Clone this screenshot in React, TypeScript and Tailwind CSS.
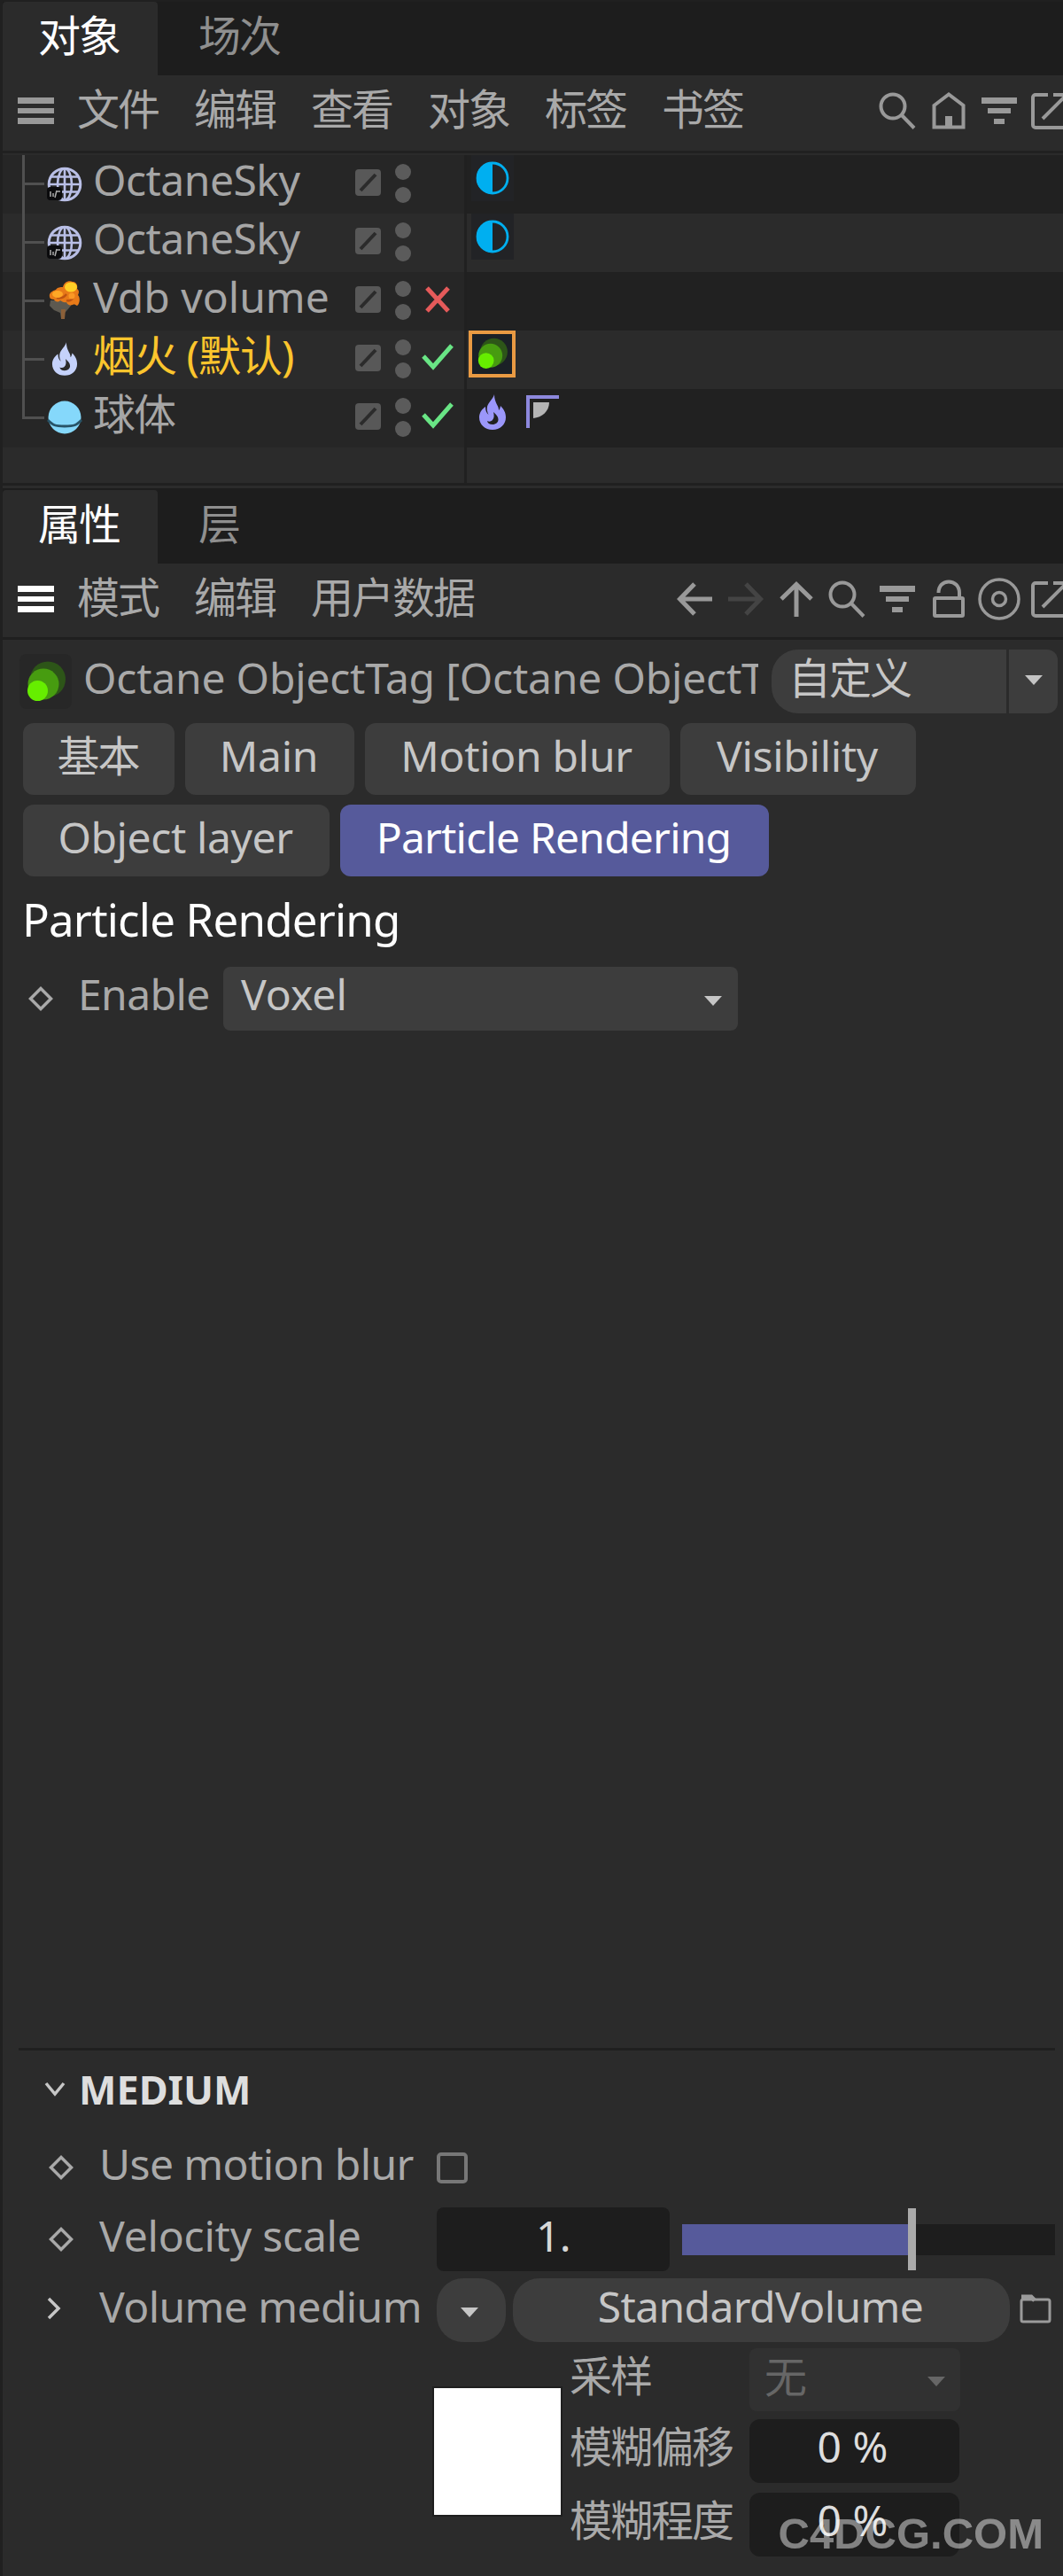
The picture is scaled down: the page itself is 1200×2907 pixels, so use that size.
import React from 'react';
import clsx from 'clsx';

type IconProps = { className?: string };

const SearchIcon = () => (
  <svg width="44" height="44" viewBox="0 0 44 44" fill="none" stroke="currentColor" strokeWidth="4">
    <circle cx="17" cy="17" r="13.5" />
    <path d="M26.5 26.5 41 41.500" />
  </svg>
);

const HomeIcon = () => (
  <svg width="44" height="44" viewBox="0 0 44 44" fill="none" stroke="currentColor" strokeWidth="4">
    <path d="M5.500 16 22 3.500 38.500 16V40.500H5.500Z" />
    <path d="M22 41V28" strokeWidth="8" />
  </svg>
);

const FilterIcon = () => (
  <svg width="44" height="44" viewBox="0 0 44 44" fill="currentColor">
    <path d="M2 7h40v7H2zM9 19h26v6H9zM16 31h12v6H16z" />
  </svg>
);

const ExternalIcon = () => (
  <svg width="44" height="44" viewBox="0 0 44 44" fill="none" stroke="currentColor" strokeWidth="4">
    <path d="M20 4H6a3 3 0 0 0-3 3v31a3 3 0 0 0 3 3h31a3 3 0 0 0 3-3V24" />
    <path d="M26 4h15v15M41 4 14 31" />
  </svg>
);

const ArrowIcon = ({ className }: IconProps) => (
  <svg
    className={className}
    width="40"
    height="40"
    viewBox="0 0 40 40"
    fill="none"
    stroke="currentColor"
    strokeWidth="5"
  >
    <path d="M40 20H4M20 3 3.500 20 20 37" />
  </svg>
);

const LockIcon = () => (
  <svg width="44" height="44" viewBox="0 0 44 44" fill="none" stroke="currentColor" strokeWidth="4">
    <rect x="6" y="21" width="32" height="20" rx="1" />
    <path d="M10.500 15C10.500 7 15.500 2.500 22 2.500S34 7 34 15v6" />
  </svg>
);

const TargetIcon = () => (
  <svg width="50" height="50" viewBox="0 0 50 50" fill="none" stroke="currentColor" strokeWidth="3.500">
    <circle cx="25" cy="25" r="22" />
    <circle cx="25" cy="25" r="7.500" />
  </svg>
);

const CaretIcon = ({ className }: IconProps) => (
  <svg className={className} width="20" height="11" viewBox="0 0 20 11" fill="currentColor">
    <path d="M0 0h20L10 11Z" />
  </svg>
);

const DiamondIcon = () => (
  <svg width="28" height="28" viewBox="0 0 28 28" fill="none" stroke="#a9a9a9" strokeWidth="3.500">
    <path d="M14 2.500 25.500 14 14 25.500 2.500 14Z" />
  </svg>
);

const FlameIcon = ({ className }: IconProps) => (
  <svg className={className} width="32" height="40" viewBox="0 0 32 40" fill="currentColor">
    <path
      fillRule="evenodd"
      d="M18 0c-1 5-7 9-8 14-.6 3 0 6 1.500 9-2.500-2-3.500-5-3.500-9-3 2-7 6-7 12 0 8 6.500 14 15 14s15-6 15-14c0-6-3-10-6-13-.3 2.500-1 4-2 5 .5-5-5-8-5-18Zm-1 20c3 3 5.500 5 5.500 8.500 0 3-2.700 5.500-6.500 5.500-3.500 0-5.500-1.500-6-4 2 1 4 .8 5.500-.5 2.500-2.300 2.500-5.500 1.500-9.500Z"
    />
  </svg>
);

const GlobeIcon = () => (
  <svg width="42" height="42" viewBox="0 0 42 42" fill="none" stroke="#b9bfe6" strokeWidth="2.600">
    <circle cx="21" cy="21" r="17.800" strokeWidth="3" />
    <ellipse cx="21" cy="21" rx="8" ry="17.800" />
    <path d="M21 3v36M3 21h36M6 12.500h30M6 29.500h30" />
    <rect x="1" y="24" width="17" height="15" rx="4" fill="#0b0b0d" stroke="none" />
    <path d="M5 29v6M8 35v-4M12 28l-2 8M12 29h4" stroke="#aaa" strokeWidth="1.500" />
  </svg>
);

const CloudIcon = () => (
  <svg className="mb-0.5" width="36" height="44" viewBox="0 0 36 44">
    <path d="M2 22h24l-1 6-5 6-2 2v7h-4l-1-7-7-3-5-5Z" fill="#5d5950" />
    <path d="M14 32h5l-1 11h-4Z" fill="#8b6039" />
    <path
      d="M1 18c-1-4 3-7 7-8 2-3 5-3 8-3 1-5 6-8 11-6 4 0 6 4 5 8 3 2 2 5 1 7 3 3 2 10-1 12-2-1-3-2-5-1-3 1-6 0-7-3-3 1-5-1-7-2-3 3-6 1-7-1-3 0-5-1-5-3Z"
      fill="#e87a18"
    />
    <path d="M9 19c4 1 8 0 11-4M20 22c3 1 6 0 8-4" fill="none" stroke="#bd5312" strokeWidth="2.500" />
    <ellipse cx="25" cy="7" rx="7" ry="5.500" fill="#ffd026" />
    <ellipse cx="10" cy="15" rx="6" ry="4" fill="#ffa726" />
    <circle cx="26" cy="17" r="3.500" fill="#fb9825" />
  </svg>
);

const SphereIcon = () => (
  <svg width="42" height="42" viewBox="0 0 42 42">
    <circle cx="21" cy="20" r="18.500" fill="#85d8fb" />
    <path d="M2 23c6 6 8 7 19 7s13-1 19-7" fill="none" stroke="#285468" strokeWidth="2.800" />
  </svg>
);

const OctaneIcon = ({ className }: IconProps) => (
  <svg className={className} viewBox="0 0 46 52">
    <circle cx="25" cy="23.500" r="20" fill="#2d5518" />
    <circle cx="20" cy="29" r="17.500" fill="#479c10" />
    <circle cx="13.500" cy="36.500" r="11.500" fill="#66ee00" />
  </svg>
);

const HalfCircleTag = () => (
  <span className="flex h-[52px] w-12 items-center justify-center bg-[#222326]">
    <svg width="38" height="38" viewBox="0 0 38 38">
      <circle cx="19" cy="19" r="17" fill="none" stroke="#00aff0" strokeWidth="2.800" />
      <path d="M19 1a18 18 0 0 0 0 36Z" fill="#00aff0" />
    </svg>
  </span>
);

const PhongTag = () => (
  <svg width="38" height="38" viewBox="0 0 38 38">
    <path d="M2 37V2h35" fill="none" stroke="#8d88dd" strokeWidth="4" />
    <path d="M8 8h18c0 10-8 17-18 18Z" fill="#b4b4b4" />
  </svg>
);

const Hamburger = ({ color }: { color: string }) => (
  <div className="flex w-[41px] flex-col gap-[5px]">
    <span className={clsx('h-[7px]', color)} />
    <span className={clsx('h-[6px]', color)} />
    <span className={clsx('h-[7px]', color)} />
  </div>
);

const TabBar = ({ tabs }: { tabs: string[] }) => (
  <div className="flex h-[83px] bg-[#1d1d1d] text-[48px] tracking-[-2px]">
    {tabs.map((tab, i) => (
      <div
        key={tab}
        className={clsx(
          'flex items-center pb-[7px]',
          i === 0 ? 'w-[175px] rounded-t-[4px] bg-[#2b2b2b] pl-10 text-white' : 'pl-[46px] text-[#8f8f8f]'
        )}
      >
        {tab}
      </div>
    ))}
  </div>
);

type MenuBarProps = {
  items: string[];
  icons: React.ReactNode[];
  color: string;
};

const MenuBar = ({ items, icons, color }: MenuBarProps) => (
  <div className="flex h-[85px] items-center overflow-hidden pb-[5px] pl-[17px]">
    <Hamburger color={color} />
    <div className="ml-[26px] flex gap-10 pb-1 text-[48px] tracking-[-2px] text-[#a9a9a9]">
      {items.map((item) => (
        <span key={item}>{item}</span>
      ))}
    </div>
    <div className="-mr-[14px] ml-auto flex items-center text-[#999]">
      {icons.map((icon, i) => (
        <span key={i} className="flex w-[57.300px] justify-center">
          {icon}
        </span>
      ))}
    </div>
  </div>
);

type SceneObject = {
  name: string;
  icon: React.ReactNode;
  tracking?: string;
  state?: 'on' | 'off';
  selected?: boolean;
  tags?: React.ReactNode;
};

const objects: SceneObject[] = [
  { name: 'OctaneSky', icon: <GlobeIcon />, tracking: 'tracking-[-0.5px]', tags: <HalfCircleTag /> },
  { name: 'OctaneSky', icon: <GlobeIcon />, tracking: 'tracking-[-0.5px]', tags: <HalfCircleTag /> },
  { name: 'Vdb volume', icon: <CloudIcon />, tracking: 'tracking-[0px]', state: 'off' },
  {
    name: '烟火 (默认)',
    icon: <FlameIcon className="mb-0.5 h-[38px] w-[30px] text-[#c5d2fb]" />,
    tracking: 'tracking-[-1px]',
    state: 'on',
    selected: true,
    tags: (
      <span className="-ml-[3px] flex size-[53px] items-center justify-center border-4 border-[#e99a43] bg-[#1b2026]">
        <OctaneIcon className="h-10 w-9" />
      </span>
    )
  },
  {
    name: '球体',
    icon: <SphereIcon />,
    tracking: 'tracking-[-2px]',
    state: 'on',
    tags: (
      <>
        <FlameIcon className="ml-2 text-[#9b97fa]" />
        <span className="ml-[22px]">
          <PhongTag />
        </span>
      </>
    )
  }
];

const ObjectRow = ({ object, index }: { object: SceneObject; index: number }) => {
  const { name, icon, tracking, state, selected, tags } = object;
  const isLast = index === objects.length - 1;
  const striped = index % 2 === 0;

  return (
    <div className="flex h-[66px]">
      <div className={clsx('flex w-[521px] items-center', striped ? 'bg-[#262626]' : 'bg-[#2b2b2b]')}>
        <div className="ml-[22px] flex h-full w-[25px] flex-col">
          <div className="h-[34px] border-b-[3px] border-l-[3px] border-[#505050]" />
          {!isLast && <div className="flex-1 border-l-[3px] border-[#505050]" />}
        </div>
        <span className="ml-0.5 flex w-[42px] justify-center">{icon}</span>
        <span
          className={clsx(
            'ml-[11px] w-[296px] whitespace-nowrap pb-[11px] text-[48px]',
            selected ? 'text-[#fbc52d]' : 'text-[#a6a6a6]',
            tracking
          )}
        >
          {name}
        </span>
        <svg width="29" height="30" viewBox="0 0 29 30" className="mb-1 shrink-0">
          <rect width="29" height="30" rx="4" fill="#585858" />
          <path d="M6 24 23 6" stroke="#2b2b2b" strokeWidth="4" />
        </svg>
        <span className="mb-0.5 ml-4 flex flex-col gap-2">
          <span className="size-[18px] rounded-full bg-[#5b5b5b]" />
          <span className="size-[18px] rounded-full bg-[#5b5b5b]" />
        </span>
        {state === 'on' && (
          <svg
            className="mb-[6px] ml-3 shrink-0"
            width="36"
            height="32"
            viewBox="0 0 36 32"
            fill="none"
            stroke="#69e585"
            strokeWidth="5"
          >
            <path d="M2 15 13 27 34 3" />
          </svg>
        )}
        {state === 'off' && (
          <svg
            className="mb-[5px] ml-4 shrink-0"
            width="28"
            height="30"
            viewBox="0 0 28 30"
            fill="none"
            stroke="#e55a5a"
            strokeWidth="5"
          >
            <path d="M2 2 26 28M26 2 2 28" />
          </svg>
        )}
      </div>
      <div
        className={clsx(
          'flex flex-1 items-center border-l-[3px] border-[#202020] pb-[14px] pl-[5px]',
          striped ? 'bg-[#212121]' : 'bg-[#2b2b2b]'
        )}
      >
        {tags}
      </div>
    </div>
  );
};

const ObjectManager = () => (
  <section>
    <TabBar tabs={['对象', '场次']} />
    <MenuBar
      items={['文件', '编辑', '查看', '对象', '标签', '书签']}
      color="bg-[#999]"
      icons={[<SearchIcon />, <HomeIcon />, <FilterIcon />, <ExternalIcon />]}
    />
    <div className="mb-[2px] h-[3px] bg-[#212121]" />
    {objects.map((object, i) => (
      <ObjectRow key={i} object={object} index={i} />
    ))}
    <div className="flex h-10">
      <div className="w-[521px]" />
      <div className="w-[3px] bg-[#202020]" />
    </div>
    <div className="h-[3px] bg-[#202020]" />
  </section>
);

const AttributeTab = ({ label, width, active }: { label: string; width: string; active?: boolean }) => (
  <div
    className={clsx(
      'flex h-[81px] items-center justify-center whitespace-nowrap rounded-xl pb-[7px] pr-0.5',
      width,
      active ? 'bg-[#565a9b] tracking-[-0.8px] text-white' : 'bg-[#3d3d3d] text-[#c6c6c6]'
    )}
  >
    {label}
  </div>
);

const AttributeHeader = () => (
  <div className="mt-[11px] flex h-[72px] items-center">
    <span className="ml-[19px] flex h-[62px] w-[59px] items-center justify-center rounded-lg bg-[#272727]">
      <OctaneIcon className="h-[52px] w-[46px]" />
    </span>
    <span className="ml-[13px] w-[762px] overflow-hidden whitespace-nowrap pb-[9px] tracking-[-0.2px] text-[#a9a9a9]">
      Octane ObjectTag [Octane ObjectT
    </span>
    <div className="ml-[15px] flex h-full w-[265px] items-center rounded-l-[30px] bg-[#3d3d3d] pb-2 pl-[19px] tracking-[-2px] text-[#c6c6c6]">
      自定义
    </div>
    <div className="ml-[3px] flex h-full w-[55px] items-center justify-center rounded-r-xl bg-[#3d3d3d]">
      <CaretIcon className="mt-[-4px] text-[#c4c4c4]" />
    </div>
  </div>
);

const MediumGroup = () => (
  <div className="mt-auto flex h-[596px] flex-col text-[#a9a9a9]">
    <div className="ml-[18px] mr-[9px] h-[3px] shrink-0 bg-[#1f1f1f]" />
    <div className="mt-[20px] flex h-[52px] items-center">
      <svg
        className="ml-[47px] mt-[-4px]"
        width="24"
        height="18"
        viewBox="0 0 24 18"
        fill="none"
        stroke="#c6c6c6"
        strokeWidth="3.500"
      >
        <path d="M2 2 12 14 22 2" />
      </svg>
      <span className="ml-[15px] pb-1 text-[45px] font-bold tracking-normal text-[#dedede]">MEDIUM</span>
    </div>
    <div className="mt-[24px] flex h-[72px] items-center">
      <span className="ml-[52px]">
        <DiamondIcon />
      </span>
      <span className="ml-[29px] w-[381px] whitespace-nowrap pb-2">Use motion blur</span>
      <span className="h-[35px] w-[35px] rounded-[5px] border-4 border-[#777]" />
    </div>
    <div className="mt-[9px] flex h-[72px] items-center">
      <span className="ml-[52px]">
        <DiamondIcon />
      </span>
      <span className="ml-[29px] w-[381px] whitespace-nowrap pb-2 tracking-[-0.2px]">Velocity scale</span>
      <span className="flex h-full w-[263px] items-center justify-center rounded-lg bg-[#1d1d1d] pb-[9px] text-[#d8d8d8]">
        1.
      </span>
      <div className="ml-[14px] flex h-[70px] w-[421px] items-center">
        <span className="h-[35px] w-[255px] bg-[#565a9b]" />
        <span className="h-[70px] w-[9px] bg-[#aaa]" />
        <span className="h-[35px] w-[157px] bg-[#1d1d1d]" />
      </div>
    </div>
    <div className="mt-2 flex h-[72px] items-center">
      <svg
        className="mb-1 ml-[49px]"
        width="18"
        height="26"
        viewBox="0 0 18 26"
        fill="none"
        stroke="#c6c6c6"
        strokeWidth="3.500"
      >
        <path d="M3 2 14 13 3 24" />
      </svg>
      <span className="ml-[42px] w-[381px] whitespace-nowrap pb-2">Volume medium</span>
      <span className="flex h-full w-[78px] items-center justify-center rounded-[30px] bg-[#3d3d3d] pr-1 text-[#c6c6c6]">
        <CaretIcon className="mt-1" />
      </span>
      <span className="ml-[8px] flex h-full w-[561px] items-center justify-center rounded-[30px] bg-[#3d3d3d] pb-[9px] pr-0.5 text-[#c6c6c6]">
        StandardVolume
      </span>
      <svg
        className="mb-1 ml-[11px]"
        width="36"
        height="34"
        viewBox="0 0 36 34"
        fill="none"
        stroke="#9b9b9b"
        strokeWidth="3"
      >
        <rect x="2" y="7" width="32" height="25" rx="2" />
        <path d="M2 4h11l4 4" strokeWidth="5" />
      </svg>
    </div>
    <div className="mt-[7px] flex">
      <div className="ml-[487px] mt-[45px] h-[143px] w-[143px] bg-white ring-2 ring-[#1f1f1f]" />
      <div className="ml-[10px] flex flex-col gap-[9px]">
        <div className="flex h-[71px] items-center tracking-[-2px]">
          <span className="w-[203px] pb-[9px]">采样</span>
          <span className="flex h-[71px] w-[238px] items-center justify-between rounded-lg bg-[#313131] pb-2 pl-[17px] pr-[17px] text-[#666]">
            无
            <CaretIcon className="mt-3" />
          </span>
        </div>
        {['模糊偏移', '模糊程度'].map((label, i) => (
          <div key={label} className={clsx('flex h-[72px] items-center', i === 1 && 'mt-0.5')}>
            <span className="w-[203px] whitespace-nowrap pb-[10px] tracking-[-2px]">{label}</span>
            <span className="flex h-full w-[237px] items-center justify-center rounded-xl bg-[#1d1d1d] pb-[10px] pr-1 tracking-normal text-[#dedede]">
              0 %
            </span>
          </div>
        ))}
      </div>
    </div>
  </div>
);

const AttributeManager = () => (
  <section className="flex flex-1 flex-col">
    <div className="mt-[3px] h-[2px] bg-[#1d1d1d]" />
    <TabBar tabs={['属性', '层']} />
    <MenuBar
      items={['模式', '编辑', '用户数据']}
      color="bg-white"
      icons={[
        <ArrowIcon />,
        <ArrowIcon className="rotate-180 text-[#444]" />,
        <ArrowIcon className="rotate-90" />,
        <SearchIcon />,
        <FilterIcon />,
        <LockIcon />,
        <TargetIcon />,
        <ExternalIcon />
      ]}
    />
    <div className="-mt-0.5 h-[3px] bg-[#1f1f1f]" />
    <AttributeHeader />
    <div className="ml-[23px] mt-[11px] flex flex-col gap-[11px]">
      <div className="flex gap-3">
        <AttributeTab label="基本" width="w-[171px] tracking-[-2px]" />
        <AttributeTab label="Main" width="w-[191px] tracking-[-0.3px]" />
        <AttributeTab label="Motion blur" width="w-[344px] tracking-[-0.3px]" />
        <AttributeTab label="Visibility" width="w-[266px] tracking-[-0.3px]" />
      </div>
      <div className="flex gap-3">
        <AttributeTab label="Object layer" width="w-[346px] tracking-[-0.4px]" />
        <AttributeTab label="Particle Rendering" width="w-[484px]" active />
      </div>
    </div>
    <h2 className="ml-[22px] mt-[12px] text-[51px] leading-[72px] tracking-[-0.8px] text-white">
      Particle Rendering
    </h2>
    <div className="mt-[18px] flex h-[72px] items-center">
      <span className="ml-[29px]">
        <DiamondIcon />
      </span>
      <span className="ml-[28px] w-[164px] pb-[10px] text-[#a9a9a9]">Enable</span>
      <div className="flex h-full w-[581px] items-center justify-between rounded-lg bg-[#3d3d3d] pl-5 pr-[18px] text-[#c6c6c6]">
        <span className="pb-[10px] tracking-normal">Voxel</span>
        <CaretIcon className="mt-[5px]" />
      </div>
    </div>
    <MediumGroup />
  </section>
);

const App = () => (
  <div className="relative flex h-[2907px] w-[1200px] flex-col overflow-hidden bg-[#2b2b2b] font-['Noto_Sans','Noto_Sans_CJK_SC',sans-serif] text-[48px] leading-[60px] tracking-[-0.6px]">
    <div className="flex flex-1 flex-col border-l-[3px] border-t-2 border-[#202020]">
      <ObjectManager />
      <AttributeManager />
    </div>
    <span className="absolute bottom-[18px] right-[22px] font-['Liberation_Sans',sans-serif] text-[49px] font-bold leading-[60px] tracking-normal text-white/45">
      C4DCG.COM
    </span>
  </div>
);

export default App;
